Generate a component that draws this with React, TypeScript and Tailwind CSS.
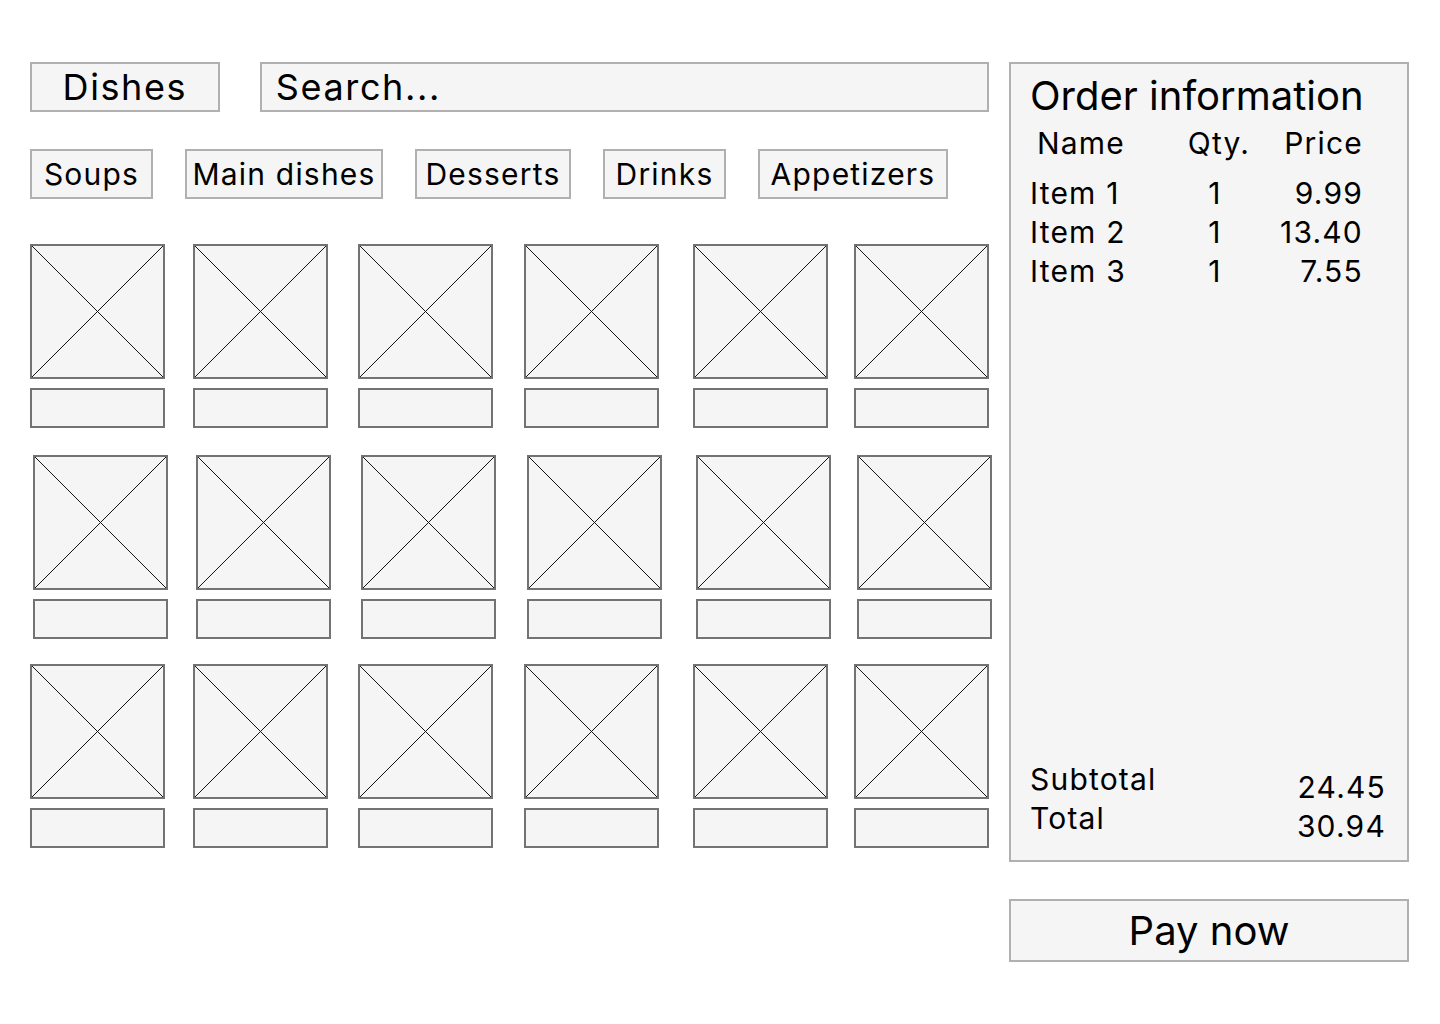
import React from 'react';

const categories = [
	{ label: 'Soups', w: 'w-[123px]' },
	{ label: 'Main dishes', w: 'w-[198px]' },
	{ label: 'Desserts', w: 'w-[156px]' },
	{ label: 'Drinks', w: 'w-[123px]' },
	{ label: 'Appetizers', w: 'w-[190px]' },
];

// left offsets of each tile in a row (gaps are not even in the mockup)
const tileGaps = ['ml-0', 'ml-[28px]', 'ml-[30px]', 'ml-[31px]', 'ml-[34px]', 'ml-[26px]'];

const rows = [
	{ shift: 'ml-0', top: 'mt-[45px]' },
	{ shift: 'ml-[3px]', top: 'mt-[27px]' },
	{ shift: 'ml-0', top: 'mt-[25px]' },
];

const items = [
	{ name: 'Item 1', qty: 1, price: '9.99' },
	{ name: 'Item 2', qty: 1, price: '13.40' },
	{ name: 'Item 3', qty: 1, price: '7.55' },
];

function Placeholder() {
	return (
		<div className="w-[135px] h-[135px] border-2 border-[#737373] bg-[#f5f5f5]">
			<svg className="w-full h-full" viewBox="0 0 100 100" preserveAspectRatio="none">
				<line x1="0" y1="0" x2="100" y2="100" stroke="#111" strokeWidth="1" vectorEffect="non-scaling-stroke" />
				<line x1="100" y1="0" x2="0" y2="100" stroke="#111" strokeWidth="1" vectorEffect="non-scaling-stroke" />
			</svg>
		</div>
	);
}

function Tile({ gap }: { gap: string }) {
	return (
		<div className={`flex flex-col gap-[9px] ${gap}`}>
			<Placeholder />
			<div className="w-[135px] h-[40px] border-2 border-[#737373] bg-[#f5f5f5]" />
		</div>
	);
}

export default function App() {
	return (
		<div className="w-[1440px] h-[1024px] bg-white text-black font-['Inter',sans-serif] flex flex-row pl-[30px] pt-[62px]">
			<div className="w-[959px] flex flex-col">
				<div className="flex flex-row gap-[40px]">
					<div className="w-[190px] h-[50px] border-2 border-[#b0b0b0] bg-[#f5f5f5] flex items-center justify-center text-[36px] tracking-[0.045em] leading-none">
						Dishes
					</div>
					<div className="w-[730px] h-[50px] border-2 border-[#b0b0b0] bg-[#f5f5f5] flex items-center pl-[14px] text-[36px] tracking-[0.045em] leading-none">
						Search...
					</div>
				</div>
				<div className="flex flex-row gap-[32px] mt-[37px]">
					{categories.map((c) => (
						<div
							key={c.label}
							className={`${c.w} h-[50px] border-2 border-[#b0b0b0] bg-[#f5f5f5] flex items-center justify-center text-[30px] tracking-[0.04em] leading-none`}
						>
							{c.label}
						</div>
					))}
				</div>
				{rows.map((r, i) => (
					<div key={i} className={`flex flex-row ${r.shift} ${r.top}`}>
						{tileGaps.map((g, j) => (
							<Tile key={j} gap={g} />
						))}
					</div>
				))}
			</div>
			<div className="ml-[20px] w-[400px] flex flex-col">
				<div className="h-[800px] border-2 border-[#b0b0b0] bg-[#f5f5f5] flex flex-col pl-[19px] pt-[12px] pb-[14px]">
					<div className="text-[40px] leading-none">Order information</div>
					<div className="grid grid-cols-[150px_78px_105px] text-[30px] tracking-[0.04em] leading-[39px] mt-[8px]">
						<div className="pl-[7px]">Name</div>
						<div className="text-center">Qty.</div>
						<div className="text-right">Price</div>
					</div>
					<div className="grid grid-cols-[146px_78px_109px] text-[30px] tracking-[0.04em] leading-[39px] mt-[11px]">
						{items.map((it) => (
							<React.Fragment key={it.name}>
								<div>{it.name}</div>
								<div className="text-center">{it.qty}</div>
								<div className="text-right">{it.price}</div>
							</React.Fragment>
						))}
					</div>
					<div className="mt-auto flex flex-row justify-between pr-[21px] text-[30px] tracking-[0.04em] leading-[39px]">
						<div className="flex flex-col">
							<span>Subtotal</span>
							<span>Total</span>
						</div>
						<div className="flex flex-col items-end pt-[8px]">
							<span>24.45</span>
							<span>30.94</span>
						</div>
					</div>
				</div>
				<div className="mt-[37px] h-[63px] border-2 border-[#b0b0b0] bg-[#f5f5f5] flex items-center justify-center text-[40px] leading-none">
					Pay now
				</div>
			</div>
		</div>
	);
}
